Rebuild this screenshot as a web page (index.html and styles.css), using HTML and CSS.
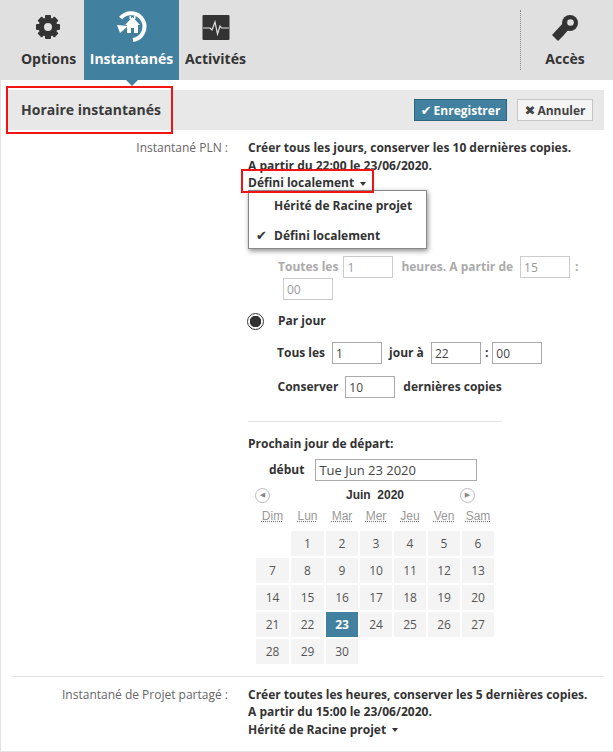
FILE: index.html
```html
<!DOCTYPE html>
<html lang="fr">
<head>
  <meta charset="UTF-8">
  <meta name="viewport" content="width=device-width, initial-scale=1.0">
  <title>Horaire instantanés</title>
  <link rel="stylesheet" href="styles.css">
</head>
<body>
  <nav class="tabs">
    <a class="tab tab-options">
      <svg class="tab-icon" width="30" height="30" viewBox="0 0 30 30">
        <g fill="#333">
          <circle cx="15" cy="15" r="9.5"/>
          <rect x="12" y="3" width="6" height="24" rx="1"/>
          <rect x="12" y="3" width="6" height="24" rx="1" transform="rotate(45 15 15)"/>
          <rect x="12" y="3" width="6" height="24" rx="1" transform="rotate(90 15 15)"/>
          <rect x="12" y="3" width="6" height="24" rx="1" transform="rotate(135 15 15)"/>
        </g>
        <circle cx="15" cy="15" r="4" fill="#e0e0e0"/>
      </svg>
      <span>Options</span>
    </a>
    <a class="tab tab-active">
      <svg class="tab-icon" width="36" height="34" viewBox="0 0 36 34">
        <path d="M4.6 9A13.5 13.5 0 1 1 17 31" fill="none" stroke="#fff" stroke-width="4"/>
        <path d="M1 16L12 17L4 24Z" fill="#fff"/>
        <path d="M16.5 8L24 16H22V24H11V16H9Z" fill="#fff"/>
        <rect x="13.5" y="7" width="1.5" height="3" fill="#fff"/>
        <rect x="18" y="7" width="1.5" height="3" fill="#fff"/>
        <rect x="15" y="19" width="3" height="5" fill="#42809f"/>
      </svg>
      <span>Instantanés</span>
    </a>
    <a class="tab tab-activity">
      <svg class="tab-icon" width="28" height="26" viewBox="0 0 28 26">
        <rect width="27" height="25" x="0.5" rx="1" fill="#333"/>
        <path d="M1 13H8L10 15L13 7L15.5 19L18 11L19.5 13H27" fill="none" stroke="#e0e0e0" stroke-width="1.2"/>
      </svg>
      <span>Activités</span>
    </a>
    <div class="tabs-spacer"></div>
    <a class="tab tab-access">
      <svg class="tab-icon" width="28" height="28" viewBox="0 0 28 28">
        <circle cx="18" cy="9" r="8" fill="#333"/>
        <path d="M12 8L17 15L11 22L6 27L0 21Z" fill="#333"/>
        <circle cx="18.5" cy="8.5" r="3.3" fill="#e0e0e0"/>
      </svg>
      <span>Accès</span>
    </a>
  </nav>

  <main class="panel">
    <header class="panel-head">
      <h1 class="panel-title">Horaire instantanés</h1>
      <div class="panel-actions">
        <button class="btn btn-save"><span class="btn-mark">✔</span>Enregistrer</button>
        <button class="btn btn-cancel"><span class="btn-mark">✖</span>Annuler</button>
      </div>
    </header>

    <section class="row row-first">
      <div class="row-label">Instantané PLN :</div>
      <div class="row-body">
        <div class="summary">Créer tous les jours, conserver les 10 dernières copies.</div>
        <div class="summary">A partir du 22:00 le 23/06/2020.</div>
        <div class="dropdown">
          <a class="dropdown-toggle flagged">Défini localement <span class="caret"></span></a>
          <ul class="dropdown-menu">
            <li>Hérité de Racine projet</li>
            <li><span class="menu-check">✔</span>Défini localement</li>
          </ul>
        </div>

        <div class="hourly">
          <span class="hourly-text">Toutes les</span>
          <input class="field field-off" value="1" disabled>
          <span class="hourly-text">heures. A partir de</span>
          <input class="field field-off field-minutes" value="15" disabled>
          <span class="hourly-text">:</span>
          <input class="field field-off field-wrapped" value="00" disabled>
        </div>

        <div class="radio-line">
          <span class="radio"></span>
          <span>Par jour</span>
        </div>
        <div class="form-line form-days">
          <span>Tous les</span>
          <input class="field" value="1">
          <span>jour à</span>
          <input class="field" value="22">
          <span class="form-colon">:</span>
          <input class="field" value="00">
        </div>
        <div class="form-line form-keep">
          <span>Conserver</span>
          <input class="field" value="10">
          <span>dernières copies</span>
        </div>

        <hr class="divider">

        <div class="start-title">Prochain jour de départ:</div>
        <div class="start-line">
          <span>début</span>
          <input class="field field-date" value="Tue Jun 23 2020">
        </div>

        <div class="calendar">
          <div class="cal-head">
            <span class="cal-nav">◀</span>
            <span class="cal-month">Juin&nbsp; 2020</span>
            <span class="cal-nav cal-next">▶</span>
          </div>
          <div class="cal-grid">
            <abbr>Dim</abbr><abbr>Lun</abbr><abbr>Mar</abbr><abbr>Mer</abbr><abbr>Jeu</abbr><abbr>Ven</abbr><abbr>Sam</abbr>
            <span class="cal-blank"></span>
            <span>1</span><span>2</span><span>3</span><span>4</span><span>5</span><span>6</span>
            <span>7</span><span>8</span><span>9</span><span>10</span><span>11</span><span>12</span><span>13</span>
            <span>14</span><span>15</span><span>16</span><span>17</span><span>18</span><span>19</span><span>20</span>
            <span>21</span><span>22</span><span class="cal-today">23</span><span>24</span><span>25</span><span>26</span><span>27</span>
            <span>28</span><span>29</span><span>30</span>
          </div>
        </div>
      </div>
    </section>

    <section class="row row-last">
      <div class="row-label">Instantané de Projet partagé :</div>
      <div class="row-body">
        <div class="summary">Créer toutes les heures, conserver les 5 dernières copies.</div>
        <div class="summary">A partir du 15:00 le 23/06/2020.</div>
        <a class="dropdown-toggle">Hérité de Racine projet <span class="caret"></span></a>
      </div>
    </section>
  </main>
</body>
</html>
```

FILE: styles.css
```css
* {
  box-sizing: border-box;
}

body {
  margin: 0;
  height: 752px;
  overflow: hidden;
  background: #fff;
  color: #333;
  font-family: 'Open Sans', sans-serif;
  font-size: 12px;
}

.tabs {
  display: flex;
  height: 80px;
  background: #e0e0e0;
  padding-left: 13px;
}

.tab {
  position: relative;
  display: flex;
  flex-direction: column;
  align-items: center;
  justify-content: flex-end;
  height: 80px;
  padding-bottom: 12px;
  color: #333;
  font-size: 14px;
  font-weight: 700;
}

.tab-icon {
  display: block;
  position: absolute;
}

.tab-options { width: 71px; }
.tab-options .tab-icon { top: 12px; left: 20px; }

.tab-active {
  width: 95px;
  background: #42809f;
  color: #fff;
}
.tab-active .tab-icon { top: 9px; left: 32px; }

.tab-active::after {
  content: "";
  position: absolute;
  left: 42px;
  bottom: -6px;
  border-left: 6px solid transparent;
  border-right: 6px solid transparent;
  border-top: 6px solid #42809f;
}

.tab-activity { width: 73px; }
.tab-activity .tab-icon { top: 15px; left: 23px; }

.tabs-spacer { flex: 1; }

.tab-access {
  width: 93px;
  padding-right: 3px;
}
.tab-access .tab-icon { top: 14px; left: 32px; }

.tab-access::before {
  content: "";
  position: absolute;
  left: 0;
  top: 10px;
  bottom: 10px;
  border-left: 1px dotted #888;
}

.panel {
  height: 672px;
  border-left: 1px solid #e2e2e2;
  border-bottom: 1px solid #e2e2e2;
  padding: 10px 9px 0 7px;
}

.panel-head {
  display: flex;
  justify-content: space-between;
  align-items: center;
  height: 40px;
  background: #e8e8e8;
  padding-right: 11px;
}

.panel-title {
  margin: 0;
  padding: 0 11px;
  height: 40px;
  line-height: 39px;
  font-size: 14px;
  font-weight: 700;
  color: #3a3a3a;
  outline: 2px solid #f01414;
  outline-offset: 2px;
  width: 159px;
  margin-left: 2px;
  white-space: nowrap;
}

.panel-actions {
  display: flex;
  gap: 10px;
}

.btn {
  height: 22px;
  padding: 0;
  font-family: inherit;
  font-size: 12px;
  font-weight: 700;
  border: 1px solid #c6c6c6;
  background: #f5f5f5;
  color: #444;
}

.btn-mark {
  font-family: 'DejaVu Sans', sans-serif;
  font-size: 13px;
  margin-right: 2px;
}

.btn-save {
  width: 93px;
  background: #42809f;
  border-color: #2c6480;
  color: #fff;
}

.btn-cancel { width: 76px; }

.row {
  display: grid;
  grid-template-columns: 220px 1fr;
  column-gap: 20px;
  line-height: 17.5px;
}

.row-first {
  padding: 9px 0 12px;
}

.row-last {
  margin-left: 3px;
  padding-top: 9px;
  border-top: 1px solid #e4e4e4;
  grid-template-columns: 217px 1fr;
}

.row-label {
  text-align: right;
  color: #666;
}

.summary {
  font-weight: 700;
  white-space: nowrap;
}

.dropdown {
  position: relative;
}

.dropdown-toggle {
  font-weight: 700;
  white-space: nowrap;
}

.flagged {
  position: relative;
  z-index: 11;
  display: block;
  width: 129px;
  margin: -3.5px 0 0 -5px;
  padding: 3.5px 0 0 5px;
  line-height: 17px;
  outline: 2px solid #f01414;
}

.caret {
  display: inline-block;
  margin-left: 3px;
  vertical-align: middle;
  border-left: 3.5px solid transparent;
  border-right: 3.5px solid transparent;
  border-top: 4px solid #333;
}

.dropdown-menu {
  position: absolute;
  z-index: 10;
  left: 0;
  top: 19px;
  width: 179px;
  height: 59px;
  margin: 0;
  padding: 0;
  list-style: none;
  background: #fff;
  border: 1px solid #888;
  box-shadow: 1px 2px 5px rgba(0, 0, 0, 0.45);
  font-weight: 700;
}

.dropdown-menu li {
  position: relative;
  height: 29px;
  line-height: 29px;
  padding-left: 25px;
}

.dropdown-menu li + li {
  padding-top: 1px;
}

.menu-check {
  position: absolute;
  left: 7px;
  font-family: 'DejaVu Sans', sans-serif;
  font-size: 13px;
}

.hourly {
  display: flex;
  flex-wrap: wrap;
  align-items: center;
  width: 310px;
  margin-top: 65px;
  margin-left: 30px;
  color: #aaa;
  font-weight: 700;
}

.hourly-text {
  margin-right: 7px;
}

.hourly-text:first-child {
  margin-right: 5px;
}

.hourly .field {
  margin-right: 8px;
}

.hourly .field-minutes {
  margin-right: 5px;
}

.hourly .field-wrapped {
  margin: 0 0 0 5px;
}

.field {
  width: 50px;
  height: 22px;
  padding: 0 3px;
  border: 1px solid #aaa;
  background: #fff;
  color: #444;
  font-family: inherit;
  font-size: 12px;
}

.field-off {
  border-color: #ccc;
  color: #999;
}

.radio-line {
  display: flex;
  align-items: center;
  gap: 14px;
  margin-top: 10px;
  margin-left: -1px;
  height: 22px;
  font-weight: 700;
}

.radio {
  width: 17px;
  height: 17px;
  border-radius: 50%;
  border: 1px solid #333;
  background: radial-gradient(circle, #333 5.5px, #fff 6px);
}

.form-line {
  display: flex;
  align-items: center;
  gap: 7px;
  margin-left: 30px;
  font-weight: 700;
}

.form-days {
  margin-top: 10px;
  margin-left: 29px;
}

.form-colon {
  margin: 0 -3px;
}

.form-keep {
  margin-top: 12px;
  margin-left: 29.5px;
}

.form-keep .field { margin-right: 1px; }

.divider {
  width: 254px;
  margin: 23px 0 0;
  border: 0;
  border-top: 1px solid #e4e4e4;
}

.start-title {
  margin-top: 13px;
  font-weight: 700;
}

.start-line {
  display: flex;
  align-items: center;
  gap: 11px;
  margin-top: 6px;
  margin-left: 21px;
  font-weight: 700;
}

.field-date {
  width: 162px;
  font-size: 13px;
}

.calendar {
  width: 238px;
  margin-top: 6px;
  margin-left: 8px;
}

.cal-head {
  display: flex;
  align-items: center;
  height: 18px;
  margin-left: -1px;
}

.cal-nav {
  width: 15px;
  height: 15px;
  border: 1px solid #bbb;
  border-radius: 50%;
  color: #888;
  font-family: 'DejaVu Sans', sans-serif;
  font-size: 7px;
  line-height: 13px;
  text-align: center;
}

.cal-month {
  margin-left: 76px;
  font-family: 'Liberation Sans', sans-serif;
  font-size: 12px;
  font-weight: 700;
}

.cal-next {
  margin-left: auto;
  margin-right: 19px;
}

.cal-grid {
  display: grid;
  grid-template-columns: 33px 33px repeat(5, 32px);
  column-gap: 2px;
  row-gap: 2px;
  margin-top: 4px;
}

.cal-grid abbr {
  height: 20px;
  line-height: 14px;
  text-align: center;
  font-family: 'Liberation Sans', sans-serif;
  color: #999;
  text-decoration: underline dotted #777;
}

.cal-grid span {
  height: 25px;
  line-height: 25px;
  text-align: center;
  background: #f4f4f4;
  color: #555;
}

.cal-grid .cal-blank {
  background: none;
}

.cal-grid .cal-today {
  background: #42809f;
  color: #fff;
  font-weight: 700;
}
```
